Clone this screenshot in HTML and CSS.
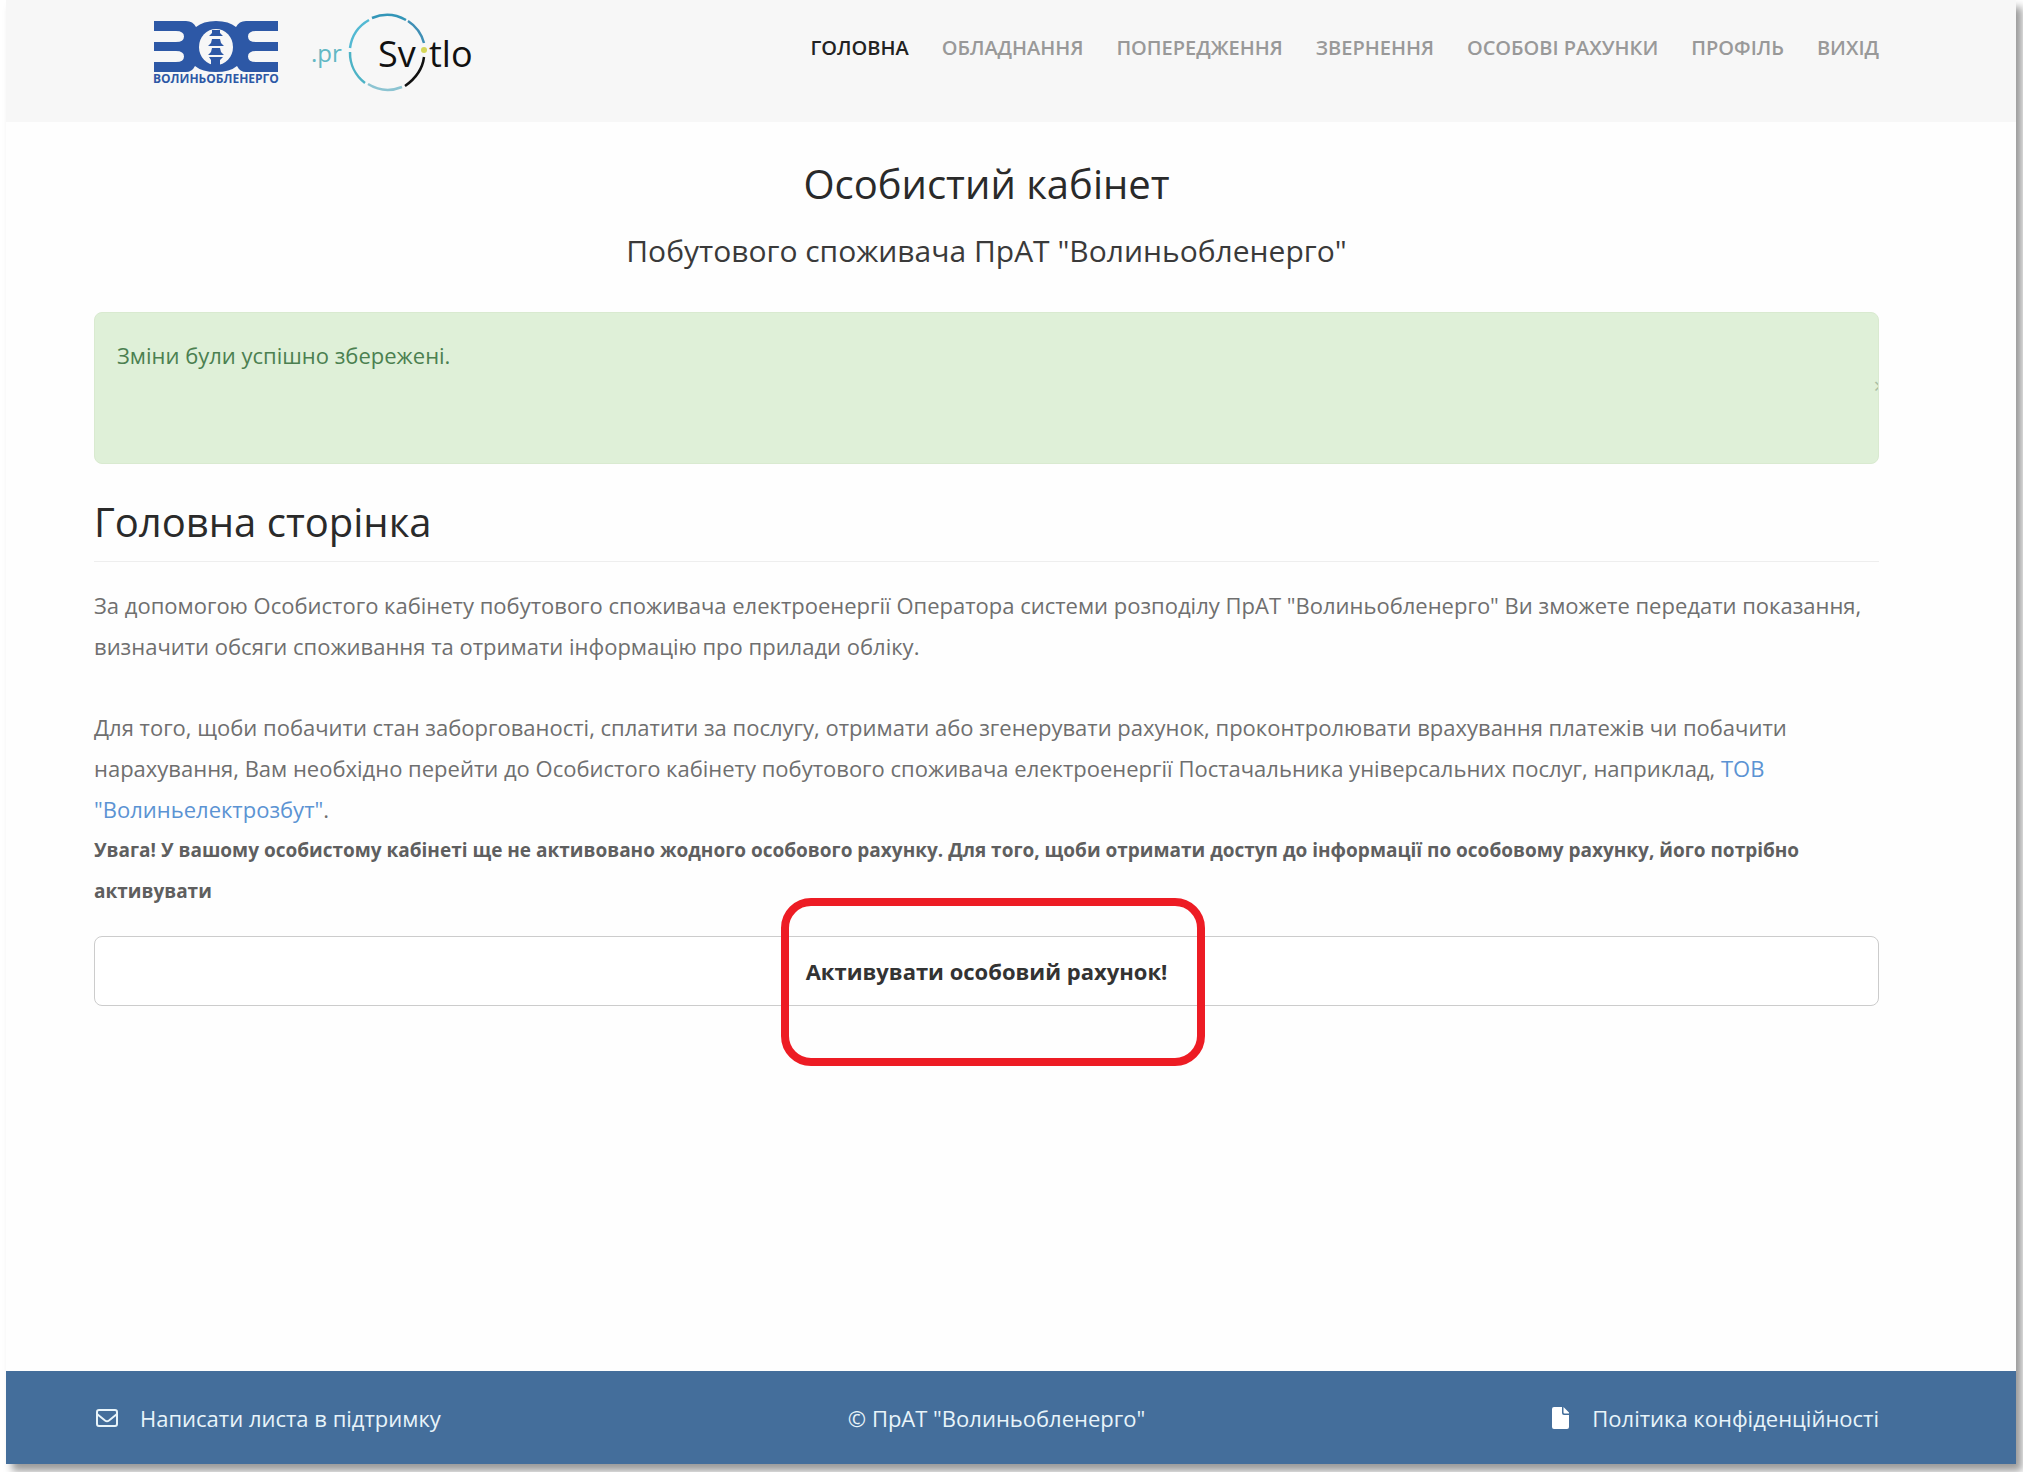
FILE: index.html
```html
<!DOCTYPE html>
<html lang="uk">
<head>
    <meta charset="UTF-8">
    <meta name="viewport" content="width=device-width, initial-scale=1.0">
    <title>Особистий кабінет</title>
    <link rel="stylesheet" href="styles.css">
</head>
<body>
    <div class="page">
        <header class="header">
            <div class="logos">
                <a href="#" class="logo" aria-label="Волиньобленерго">
                    <svg width="126" height="68" viewBox="0 0 126 68">
                        <g fill="#2d58a6">
                            <path d="M1 1H33Q40 1 43 7Q50 1 63 1T83 7Q86 1 93 1H125V11H103Q95 11 95 16.500T103 22H125V31H103Q95 31 95 36.500T103 42H125V52H93Q87 52 84 46Q77 52 63 52T42 46Q39 52 33 52H1V42H23Q31 42 31 36.500T23 31H1V22H23Q31 22 31 16.500T23 11H1Z"/>
                            <text x="0" y="63" class="logo-caption">ВОЛИНЬОБЛЕНЕРГО</text>
                        </g>
                        <ellipse cx="63" cy="27" rx="17" ry="18" fill="#f7f7f7"/>
                        <g fill="#2d58a6">
                            <path d="M59 10H67V13L70 16H56L59 13Z"/>
                            <path d="M59 19H67L68 23L71 26H55L58 23Z"/>
                            <path d="M59 28H67L68 32L71 35H55L58 32Z"/>
                            <path d="M56 37H70L67 40V46H58V40Z"/>
                        </g>
                    </svg>
                </a>
                <a href="#" class="logo" aria-label="proSvitlo">
                    <svg width="162" height="80" viewBox="0 0 162 80" fill="none">
                        <g stroke-width="2.500">
                            <path d="M61 6A38 38 0 0 1 95 8" stroke="#3396b8"/>
                            <path d="M97 9A38 38 0 0 1 113 31" stroke="#3f8fb5"/>
                            <path d="M58 8A38 38 0 0 0 39 36" stroke="#53b9d3"/>
                            <path d="M39 40A38 38 0 0 0 54 71" stroke="#4db3c6"/>
                            <path d="M57 72A38 38 0 0 0 91 75" stroke="#8cc4d2"/>
                            <path d="M113 45Q111 62 94 74" stroke="#111"/>
                        </g>
                        <text x="0" y="50" class="logo-pr">.pr</text>
                        <text x="67" y="55" class="logo-svitlo">Sv</text>
                        <text x="118" y="55" class="logo-svitlo">tlo</text>
                        <circle cx="113" cy="38" r="3" fill="#d5d657"/>
                    </svg>
                </a>
            </div>
            <nav class="nav">
                <a href="#" class="active">Головна</a>
                <a href="#">Обладнання</a>
                <a href="#">Попередження</a>
                <a href="#">Звернення</a>
                <a href="#">Особові рахунки</a>
                <a href="#">Профіль</a>
                <a href="#">Вихід</a>
            </nav>
        </header>

        <main class="content">
            <div class="intro">
                <h1>Особистий кабінет</h1>
                <p class="subtitle">Побутового споживача ПрАТ "Волиньобленерго"</p>
            </div>

            <div class="alert" role="alert">
                <span>Зміни були успішно збережені.</span>
                <button type="button" class="alert-close" aria-label="Закрити">×</button>
            </div>

            <h2>Головна сторінка</h2>

            <div class="text">
                <p>За допомогою Особистого кабінету побутового споживача електроенергії Оператора системи розподілу ПрАТ "Волиньобленерго" Ви зможете передати показання, визначити обсяги споживання та отримати інформацію про прилади обліку.</p>
                <p>Для того, щоби побачити стан заборгованості, сплатити за послугу, отримати або згенерувати рахунок, проконтролювати врахування платежів чи побачити нарахування, Вам необхідно перейти до Особистого кабінету побутового споживача електроенергії Постачальника універсальних послуг, наприклад, <a href="#">ТОВ "Волиньелектрозбут"</a>.</p>
            </div>
            <p class="warning">Увага! У вашому особистому кабінеті ще не активовано жодного особового рахунку. Для того, щоби отримати доступ до інформації по особовому рахунку, його потрібно активувати</p>

            <div class="activate">
                <button type="button" class="activate-btn">Активувати особовий рахунок!</button>
                <span class="marker"></span>
            </div>
        </main>

        <footer class="footer">
            <a href="#">
                <svg width="22" height="18" viewBox="0 0 22 18" fill="none" stroke="currentColor" stroke-width="2">
                    <rect x="1" y="1" width="20" height="16" rx="2"/>
                    <path d="M1 5L9 11.500Q11 13 13 11.500L21 5"/>
                </svg>
                Написати листа в підтримку
            </a>
            <span>© ПрАТ "Волиньобленерго"</span>
            <a href="#">
                <svg width="18" height="22" viewBox="0 0 18 22" fill="#fff">
                    <path d="M2 0H10V6Q10 8 12 8H17V20Q17 22 15 22H2Q0 22 0 20V2Q0 0 2 0ZM11.500 0L17 5.500V6.500H12.500Q11.500 6.500 11.500 5.500Z"/>
                </svg>
                Політика конфіденційності
            </a>
        </footer>
    </div>
</body>
</html>
```
FILE: styles.css
```css
:root {
    --header-bg: #f7f7f7;
    --footer-bg: #446e9b;
    --text: #6f6f6f;
    --heading: #2a2a2a;
    --link: #5b93d3;
}

* { box-sizing: border-box; }

body {
    font-family: 'Open Sans', sans-serif;
    font-size: 22px;
    line-height: 41px;
    margin: 0;
    color: var(--text);
    background: #fff;
}

h1, h2, p { margin: 0; }
a { color: var(--link); text-decoration: none; }

/* --- Page frame --- */
.page {
    display: flex;
    flex-direction: column;
    min-height: calc(100vh - 8px);
    margin: 0 7px 8px 6px;
    background: #fefefe;
    box-shadow: 6px 7px 8px rgba(0, 0, 0, 0.4);
}

/* --- Header --- */
.header {
    display: flex;
    justify-content: space-between;
    align-items: flex-start;
    height: 122px;
    padding: 12px 137px 0 147px;
    background: var(--header-bg);
}
.logos { display: flex; gap: 32px; }
.logo svg { display: block; }
.logo:first-child { padding-top: 8px; }
.logo-caption { font-size: 12px; font-weight: 700; }
.logo-pr { font-size: 24px; fill: #62b8c4; }
.logo-svitlo { font-size: 36px; fill: #111; }

.nav { display: flex; gap: 33px; padding-top: 15px; }
.nav a {
    font-size: 20px;
    font-weight: 600;
    text-transform: uppercase;
    color: #999;
}
.nav a.active { color: #222; }

/* --- Content --- */
.content { flex: 1; padding: 36px 137px 0 88px; }

h1, h2 { font-size: 40px; font-weight: 500; line-height: 52px; color: var(--heading); }
.intro { text-align: center; }
.subtitle { margin-top: 20px; font-size: 30px; color: #3a3a3a; }

.alert {
    display: flex;
    justify-content: space-between;
    height: 152px;
    margin-top: 41px;
    padding: 22px 22px 28px;
    overflow: hidden;
    border: 1px solid #d9ead0;
    border-radius: 8px;
    background: #dff0d8;
    color: #4b8050;
}
.alert-close {
    align-self: center;
    margin-right: -30px;
    padding: 0;
    border: 0;
    background: none;
    font: inherit;
    color: #a9bfa6;
}

h2 { margin-top: 32px; padding-bottom: 13px; border-bottom: 1px solid #eee; }

.text { display: flex; flex-direction: column; gap: 40px; margin-top: 23px; }
.warning { font-size: 19px; font-weight: 700; color: #5f5f5f; }

/* --- Activate button --- */
.activate { position: relative; margin-top: 24px; }
.activate-btn {
    width: 100%;
    height: 70px;
    border: 1px solid #ccc;
    border-radius: 8px;
    background: #fff;
    font: inherit;
    font-weight: 700;
    color: #333;
    cursor: pointer;
}
.marker {
    position: absolute;
    top: -38px;
    left: 50%;
    width: 424px;
    height: 168px;
    margin-left: -206px;
    border: 8px solid #ed1c24;
    border-radius: 30px;
    pointer-events: none;
}

/* --- Footer --- */
.footer {
    display: flex;
    justify-content: space-between;
    align-items: center;
    height: 93px;
    padding: 1px 137px 0 90px;
    background: var(--footer-bg);
    color: #e8f4fa;
}
.footer a { display: flex; align-items: center; gap: 22px; color: inherit; }
```
